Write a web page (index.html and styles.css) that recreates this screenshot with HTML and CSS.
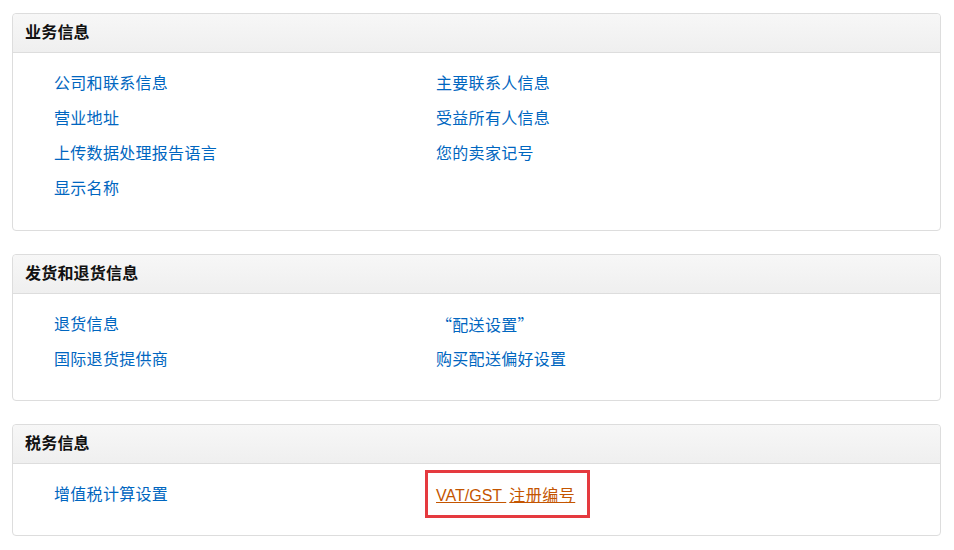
FILE: index.html
```html
<!DOCTYPE html>
<html lang="zh-CN">
<head>
    <meta charset="UTF-8">
    <meta name="viewport" content="width=device-width, initial-scale=1.0">
    <title>账户信息</title>
    <link rel="stylesheet" href="styles.css">
</head>
<body>
    <div class="page">
        <div class="panel">
            <div class="panel-header">业务信息</div>
            <div class="panel-body">
                <ul class="link-list">
                    <li><a href="#">公司和联系信息</a></li>
                    <li><a href="#">主要联系人信息</a></li>
                    <li><a href="#">营业地址</a></li>
                    <li><a href="#">受益所有人信息</a></li>
                    <li><a href="#">上传数据处理报告语言</a></li>
                    <li><a href="#">您的卖家记号</a></li>
                    <li><a href="#">显示名称</a></li>
                </ul>
            </div>
        </div>

        <div class="panel">
            <div class="panel-header">发货和退货信息</div>
            <div class="panel-body short">
                <ul class="link-list">
                    <li><a href="#">退货信息</a></li>
                    <li><a href="#" class="cjk">“配送设置”</a></li>
                    <li><a href="#">国际退货提供商</a></li>
                    <li><a href="#">购买配送偏好设置</a></li>
                </ul>
            </div>
        </div>

        <div class="panel">
            <div class="panel-header">税务信息</div>
            <div class="panel-body short">
                <ul class="link-list">
                    <li><a href="#">增值税计算设置</a></li>
                    <li class="highlight"><a href="#" class="active">VAT/GST <span class="cjk">注册编号</span></a></li>
                </ul>
            </div>
        </div>
    </div>
</body>
</html>
```

FILE: styles.css
```css
/* Basic Reset */
* {
    margin: 0;
    padding: 0;
    box-sizing: border-box;
}

body {
    font-family: "Liberation Sans", "Noto Sans CJK SC", sans-serif;
    font-size: 16px;
    color: #111;
    background-color: #fff;
}

/* Full width punctuation */
.cjk {
    font-family: "Noto Sans CJK SC", sans-serif;
}

/* Page wrapper */
.page {
    padding: 13px 13px 0 12px;
}

/* Panel box */
.panel {
    border: 1px solid #ddd;
    border-radius: 4px;
    margin-bottom: 23px;
    background-color: #fff;
}

/* Panel title bar */
.panel-header {
    height: 39px;
    line-height: 37px;
    padding: 0 12px;
    font-weight: bold;
    font-size: 16px;
    letter-spacing: 0.2px;
    color: #111;
    background: linear-gradient(to bottom, #f7f7f7, #efefef);
    border-bottom: 1px solid #ddd;
    border-radius: 4px 4px 0 0;
}

/* Panel content */
.panel-body {
    padding: 13px 0 24px 41px;
}

.panel-body.short {
    padding-bottom: 23px;
}

/* Two column links */
.link-list {
    list-style: none;
    display: grid;
    grid-template-columns: 382px 1fr;
}

.link-list li {
    height: 35px;
    line-height: 35px;
    letter-spacing: 0.3px;
}

.link-list a {
    color: #0066c0;
    text-decoration: none;
}

/* Selected link */
.link-list li.highlight {
    position: relative;
}

.link-list li.highlight::after {
    content: "";
    position: absolute;
    left: -11px;
    top: -7px;
    width: 165px;
    height: 48px;
    box-sizing: border-box;
    border: 3px solid #e53a3f;
}

.link-list a.active {
    color: #c45500;
    text-decoration: underline;
    letter-spacing: 0;
}

.link-list a.active .cjk {
    letter-spacing: 0.5px;
    padding-left: 3px;
}
```
